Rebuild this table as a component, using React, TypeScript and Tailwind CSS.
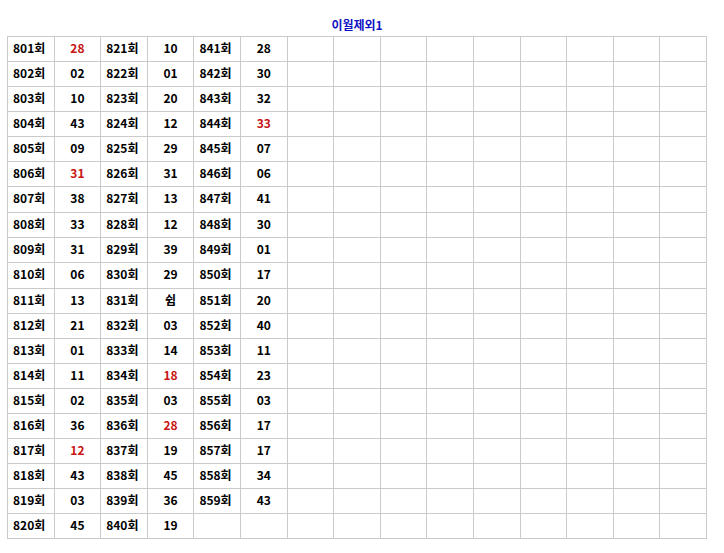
import { Fragment } from 'react';

const col1 = ['28', '02', '10', '43', '09', '31', '38', '33', '31', '06', '13', '21', '01', '11', '02', '36', '12', '43', '03', '45'];
const col2 = ['10', '01', '20', '12', '29', '31', '13', '12', '39', '29', '쉼', '03', '14', '18', '03', '28', '19', '45', '36', '19'];
const col3 = ['28', '30', '32', '33', '07', '06', '41', '30', '01', '17', '20', '40', '11', '23', '03', '17', '17', '34', '43', ''];

// column-row pairs shown in red
const red = new Set(['0-0', '0-5', '0-16', '1-13', '1-15', '2-3']);

const rows = Array.from({ length: 20 }, (_, i) => i);
const blanks = Array.from({ length: 9 }, (_, i) => i);

export default function App() {
  return (
    <div
      className="min-h-screen bg-white pl-[7px] text-[12px] font-bold text-black"
      style={{ fontFamily: '"Noto Sans CJK KR", "Noto Sans", sans-serif' }}
    >
      <div className="w-[700px] h-[36px] pt-[15px] text-center text-[12px] leading-[20px] text-[#1212c4]">
        이월제외1
      </div>
      <table className="w-[700px] table-fixed border-collapse">
        <tbody>
          {rows.map((r) => (
            <tr key={r} className={r === 6 || r === 9 ? 'h-[26px]' : 'h-[25px]'}>
              {[col1, col2, col3].map((vals, c) => (
                <Fragment key={c}>
                  <td className="border border-[#cacaca] p-0 pl-[5px] pb-[3px] text-left">
                    {r === 19 && c === 2 ? '' : `${801 + c * 20 + r}회`}
                  </td>
                  <td
                    className={`border border-[#cacaca] p-0 pb-[3px] text-center ${red.has(`${c}-${r}`) ? 'text-[#c81414]' : ''}`}
                  >
                    {vals[r]}
                  </td>
                </Fragment>
              ))}
              {blanks.map((b) => (
                <td key={b} className="border border-[#cacaca] p-0" />
              ))}
            </tr>
          ))}
        </tbody>
      </table>
    </div>
  );
}
